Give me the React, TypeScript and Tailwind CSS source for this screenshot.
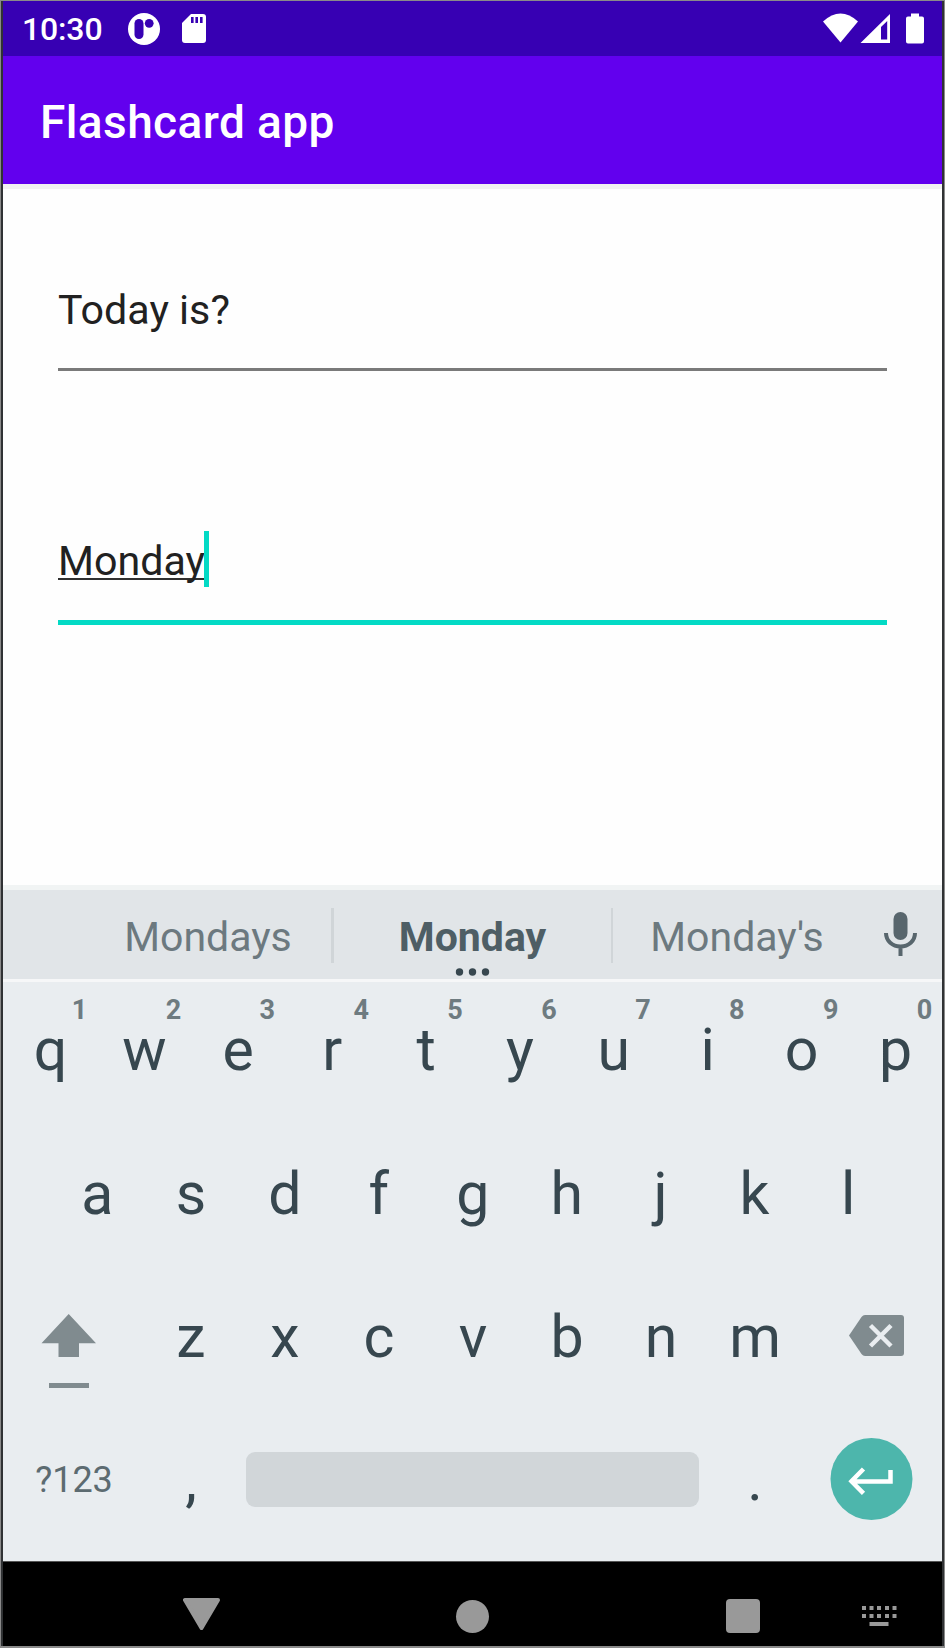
import React from "react";

const topKeys = ["q", "w", "e", "r", "t", "y", "u", "i", "o", "p"];
const homeKeys = ["a", "s", "d", "f", "g", "h", "j", "k", "l"];
const bottomKeys = ["z", "x", "c", "v", "b", "n", "m"];

function StatusBar() {
  return (
    <div className="flex h-[55px] shrink-0 items-center bg-[#3700b3] text-white">
      <span className="ml-[19px] w-[106px] pt-0.5 text-[32px] leading-[55px] font-medium tracking-[-0.15px]">10:30</span>
      <svg className="h-8 w-8" viewBox="0 0 32 32">
        <circle cx="16" cy="16" r="16" fill="#fff" />
        <rect x="6.5" y="6" width="9" height="20" rx="4.5" fill="#3700b3" />
        <circle cx="21.2" cy="10.3" r="4.4" fill="#3700b3" />
      </svg>
      <svg className="ml-[22px] h-[29px] w-6" viewBox="0 0 24 29">
        <path fill="#fff" d="M9 0h12a3 3 0 0 1 3 3v23a3 3 0 0 1-3 3H3a3 3 0 0 1-3-3V9z" />
        <path fill="#3700b3" d="M9 3h2.6v6H9zM13.4 3H16v6h-2.6zM18 3h2.6v6H18z" />
      </svg>
      <svg className="mr-[17px] ml-auto h-[31px] w-[102px]" viewBox="823 13 102 31">
        <path fill="#fff" d="M823 21.500Q840.500 5.500 858 21.500L840.500 42.500z" />
        <path fill="#fff" fillRule="evenodd" d="M890 14v29h-29.500zM887.200 21L881 27v12.500h6.200z" />
        <path fill="#fff" d="M911 13.500h8v3h3a2 2 0 0 1 2 2v23a2 2 0 0 1-2 2h-14a2 2 0 0 1-2-2v-23a2 2 0 0 1 2-2h3z" />
      </svg>
    </div>
  );
}

function Form() {
  return (
    <main className="flex h-[696px] shrink-0 flex-col bg-[#fefefe] px-[55px] pt-[86px] text-[41.2px] text-[#212121]">
      <div className="flex h-[96px] items-start border-b-[3px] border-[#7a7a7a]">
        <span className="leading-[70px]">Today is?</span>
      </div>
      <div className="mt-[155px] flex h-[99px] items-start border-b-[5px] border-[#03dac5]">
        <span className="mt-[14px] h-[40px] w-[146px] border-b-2 border-[#303030] leading-[42px]">Monday</span>
        <span className="mt-[5px] h-14 w-[5px] bg-[#03dac5]" />
      </div>
    </main>
  );
}

function Suggestions() {
  return (
    <div className="flex h-[89px] shrink-0 items-center bg-[#e1e5e8] pl-[82px] text-[41px] leading-[83px] text-[#6c797f]">
      <span className="w-[246px] pt-[6px] text-center">Mondays</span>
      <span className="mt-px h-[55px] w-[3px] bg-[#d0d5d8]" />
      <span className="relative w-[277px] pt-[6px] text-center font-bold text-[#4e5e65]">
        Monday
        <svg className="absolute bottom-[3px] left-[121px] h-2 w-[35px]" viewBox="0 0 35 8">
          <g fill="#37474f">
            <circle cx="4.500" cy="4" r="3.700" />
            <circle cx="17.500" cy="4" r="3.700" />
            <circle cx="30.500" cy="4" r="3.700" />
          </g>
        </svg>
      </span>
      <span className="mt-px h-[55px] w-[2px] bg-[#d0d5d8]" />
      <span className="w-[247px] pt-[6px] pl-px text-center">Monday&#39;s</span>
      <svg className="mb-[2px] ml-[24px] h-11 w-[33px]" viewBox="884 912 33 44">
        <rect x="893.500" y="912" width="14" height="28" rx="7" fill="#58666d" />
        <path d="M886 933c0 8 6.500 13.500 14.500 13.500S915 941 915 933M900.500 946v10" fill="none" stroke="#58666d" strokeWidth="4" />
      </svg>
    </div>
  );
}

function Keyboard() {
  return (
    <div className="grid h-[579px] shrink-0 grid-rows-[136px_136px_136px_136px] content-start gap-[7.5px] bg-[#e9edf0] text-center text-[59px] leading-[136px] text-[#37474f]">
      <div className="grid grid-cols-10">
        {topKeys.map((key, i) => (
          <span key={key} className="relative pl-px">
            {key}
            <sup className="absolute top-3 left-[66.5px] w-5 text-[27px] leading-[33px] font-bold text-[#6e7b80]">{(i + 1) % 10}</sup>
          </span>
        ))}
      </div>
      <div className="grid grid-cols-9 px-[47px]">
        {homeKeys.map((key) => <span key={key} className="pl-[0.5px]">{key}</span>)}
      </div>
      <div className="flex">
        <svg className="mt-[45px] ml-[38px] h-[75px] w-[56px]" viewBox="41 1314 56 75">
          <path fill="#808b8f" d="M68.700 1314L96 1343.300H79V1357H58.500v-13.700H41.500zM49 1383h40v5H49z" />
        </svg>
        <div className="ml-[47px] grid w-[658px] grid-cols-7">
          {bottomKeys.map((key) => <span key={key}>{key}</span>)}
        </div>
        <svg className="mt-[46px] ml-[47px] h-[42px] w-[55px]" viewBox="0 0 55 42">
          <path fill="#808b8f" d="M16 0h36a3 3 0 0 1 3 3v35a3 3 0 0 1-3 3H16q-2 0-3.500-2L0 20.500 12.500 2Q14 0 16 0z" />
          <path d="M21.500 10.500l20.500 20.500M42 10.500L21.500 31" stroke="#e9edf0" strokeWidth="4.500" />
        </svg>
      </div>
      <div className="flex">
        <span className="ml-[31px] w-[80px] text-[36px] leading-[134px] text-[#5c6b71]">?123</span>
        <span className="ml-[30px] w-[94px] leading-[134px]">,</span>
        <span className="mt-[39px] ml-2 h-[55px] w-[453px] rounded-[9px] bg-[#d1d6d9]" />
        <span className="ml-2 w-[94px] pl-0.5 leading-[134px]">.</span>
        <svg className="mt-[24px] ml-[29px] h-[83px] w-[83px]" viewBox="830 1437 83 83">
          <circle cx="871.500" cy="1479" r="41" fill="#4db6ac" />
          <path d="M863.500 1469L851.500 1481.300l12 12M852 1481.500h38.500V1470" fill="none" stroke="#fff" strokeWidth="4.500" />
        </svg>
      </div>
    </div>
  );
}

function NavigationBar() {
  return (
    <div className="flex h-[85px] shrink-0 border-t border-[#555] bg-black">
      <svg className="mt-9 ml-[180px] h-8 w-[37px]" viewBox="0 0 37 32">
        <path d="M2 2h33L18.500 30z" fill="#999" stroke="#999" strokeWidth="4" strokeLinejoin="round" />
      </svg>
      <span className="mt-[38px] ml-[236px] h-[33px] w-[33px] rounded-full bg-[#999]" />
      <span className="mt-[37px] ml-[237px] h-[34px] w-[34px] rounded-[4px] bg-[#999]" />
      <svg className="mt-[44px] ml-[102px] h-5 w-[35px]" viewBox="0 0 35 20">
        <path fill="#999" d="M0 0h4v4H0zM7.500 0h4v4h-4zM15 0h4v4h-4zM23 0h4v4h-4zM30.500 0h4v4h-4zM0 8h4v4H0zM7.500 8h4v4h-4zM15 8h4v4h-4zM23 8h4v4h-4zM30.500 8h4v4h-4zM7.500 16h19v4h-19z" />
      </svg>
    </div>
  );
}

export default function App() {
  return (
    <div className="h-[1648px] w-[945px] overflow-hidden border-x border-t border-b-2 border-[#8a8a8a] font-['Roboto',sans-serif]">
      <div className="flex h-[1645px] flex-col border-x-2 border-[#303234]">
        <StatusBar />
        <header className="flex h-[128px] shrink-0 items-center bg-[#6200ee] pt-1 pl-[37px] text-[46px] font-medium tracking-[0.4px] text-white">
          <h1 className="leading-[64px]">Flashcard app</h1>
        </header>
        <div className="h-[5px] shrink-0 bg-[#f2f2f2]" />
        <Form />
        <div className="h-[5px] shrink-0 bg-[#f1f4f4]" />
        <Suggestions />
        <div className="h-[3px] shrink-0 bg-[#f6f7f8]" />
        <Keyboard />
        <NavigationBar />
      </div>
    </div>
  );
}
